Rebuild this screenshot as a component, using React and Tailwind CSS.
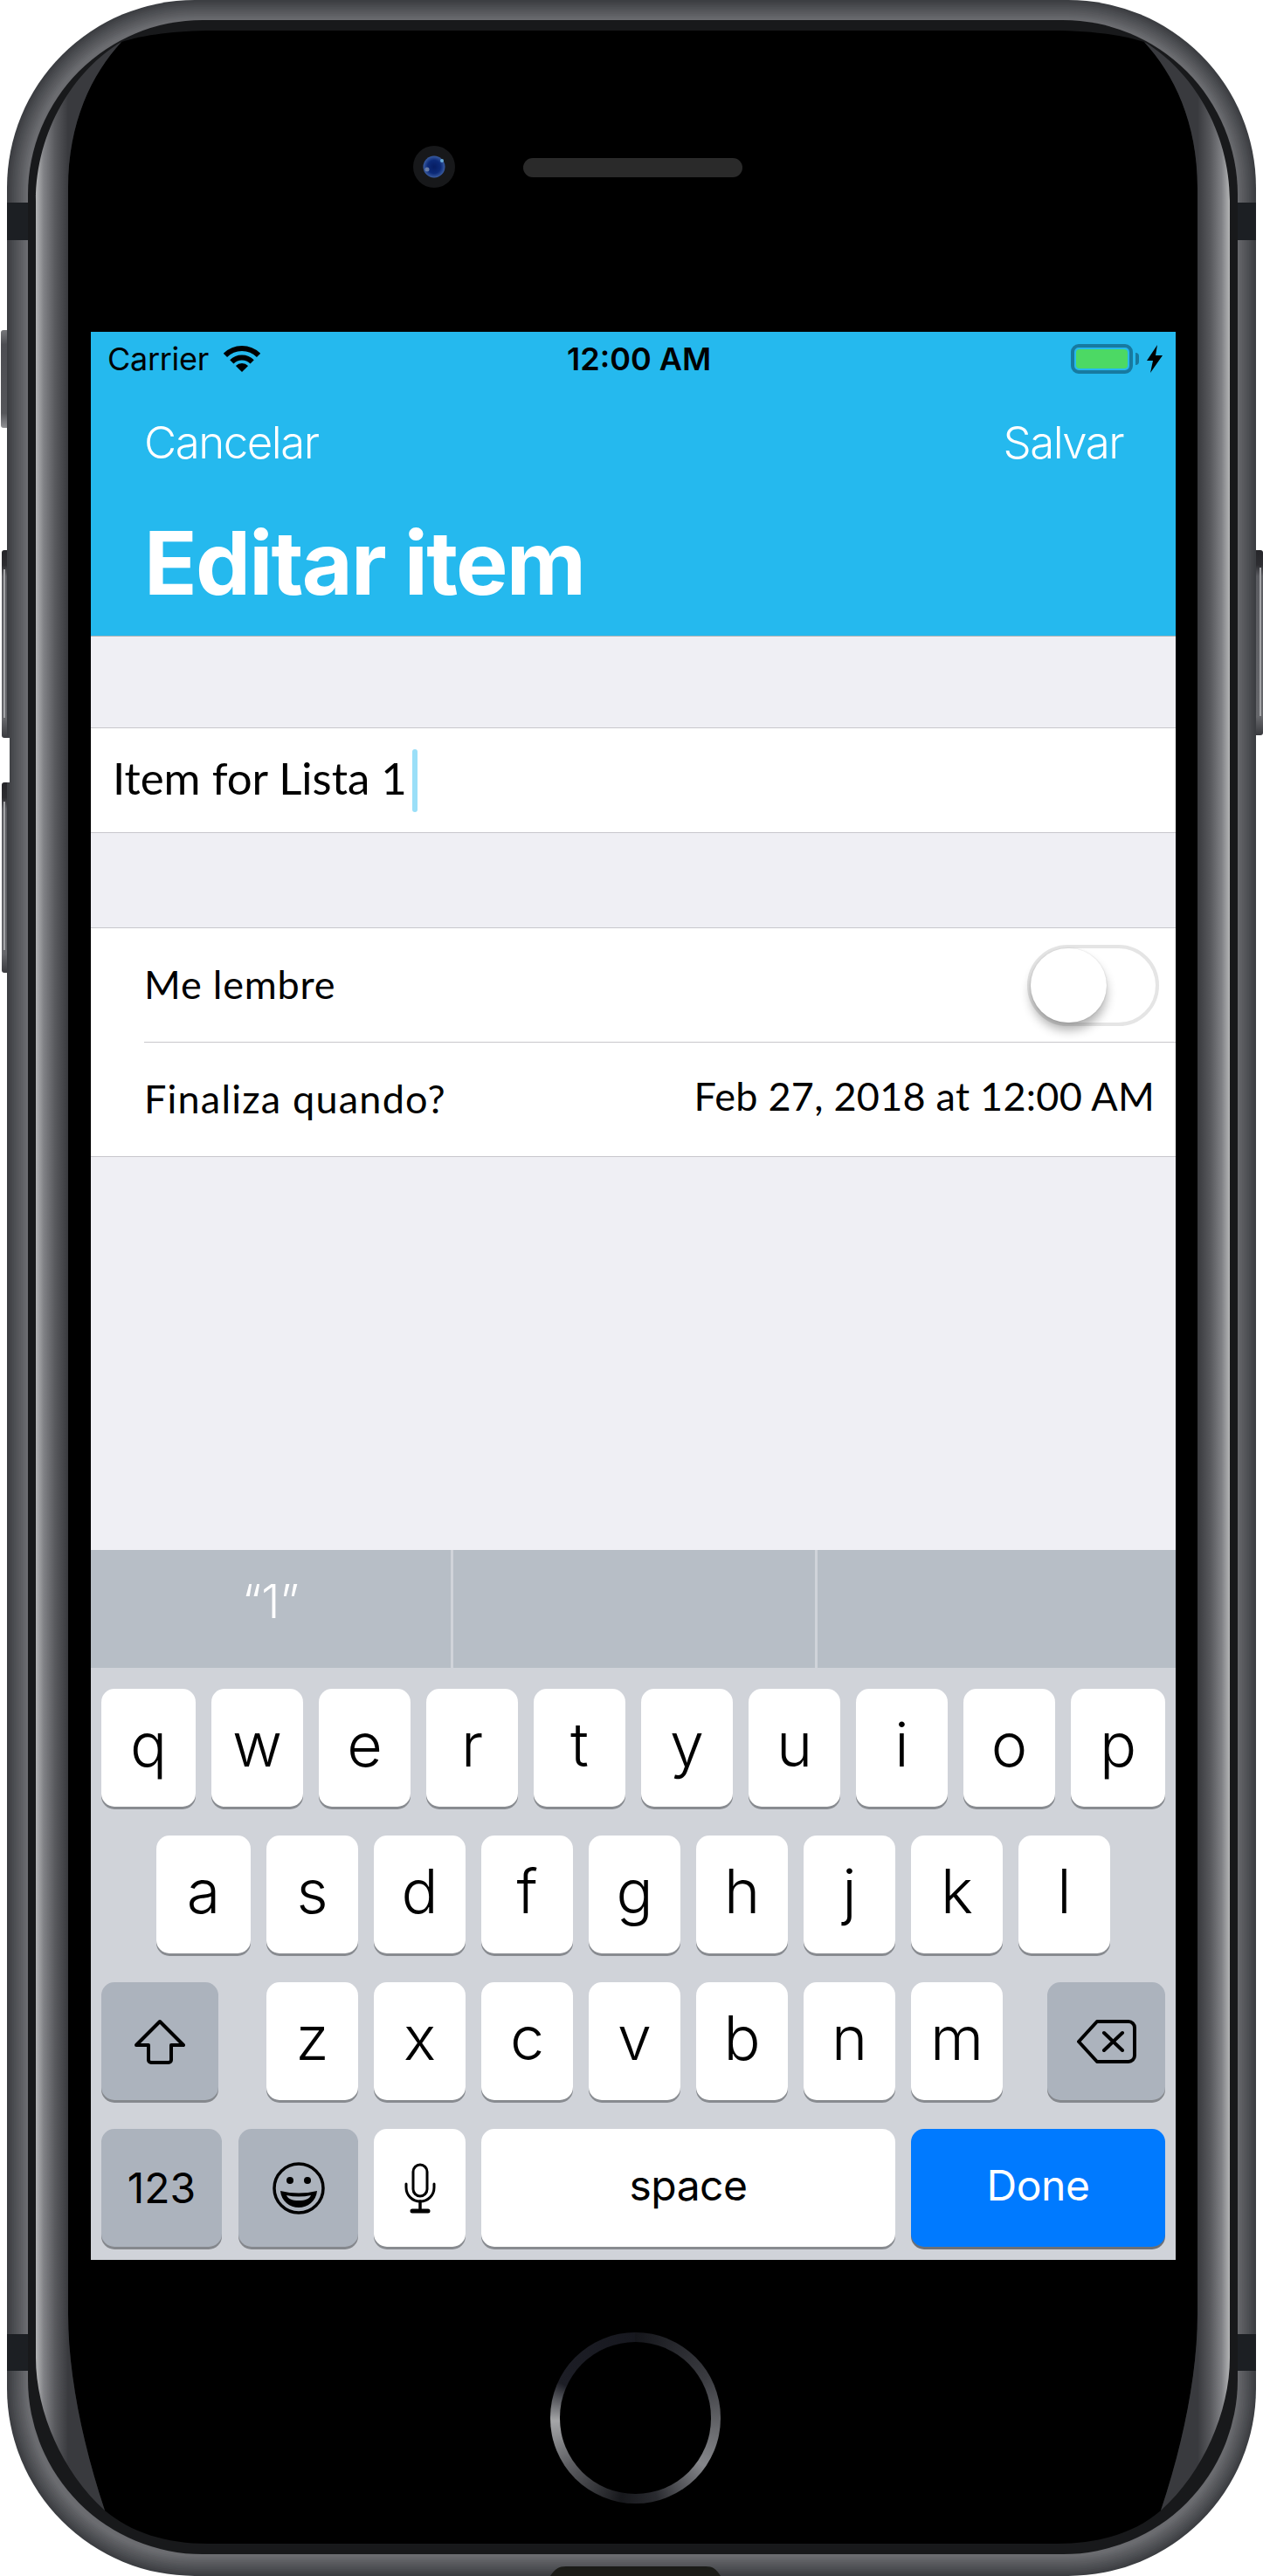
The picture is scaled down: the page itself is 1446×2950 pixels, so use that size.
import React from "react";

function lerp(a, b, t) {
  return Math.round(a + (b - a) * t);
}

function PhoneFrame() {
  const steps = [];
  for (let i = 0; i <= 11; i++) {
    const t = i / 11;
    const inset = i * 2;
    steps.push(
      <rect
        key={i}
        x={8 + inset}
        y={inset}
        width={1430 - inset * 2}
        height={2950 - inset * 2}
        rx={215 - inset}
        fill={`rgb(${lerp(60, 107, t)},${lerp(62, 108, t)},${lerp(66, 112, t)})`}
      />
    );
  }
  const left =
    "M139 48 C85 80 41 150 41 230 L41 2700 C41 2760 70 2830 120 2875 C95 2800 78 2720 78 2650 L78 215 C78 140 105 85 139 48Z";
  return (
    <svg className="absolute left-0 top-0" width="1446" height="2950" viewBox="0 0 1446 2950">
      <defs>
        <linearGradient id="hl" gradientUnits="userSpaceOnUse" x1="41" y1="0" x2="78" y2="0">
          <stop offset="0" stopColor="#b4b5b6" />
          <stop offset="0.25" stopColor="#808185" />
          <stop offset="0.6" stopColor="#58595d" />
          <stop offset="1" stopColor="#393a3e" />
        </linearGradient>
        <linearGradient id="hr" gradientUnits="userSpaceOnUse" x1="1408" y1="0" x2="1371" y2="0">
          <stop offset="0" stopColor="#b4b5b6" />
          <stop offset="0.25" stopColor="#808185" />
          <stop offset="0.6" stopColor="#58595d" />
          <stop offset="1" stopColor="#393a3e" />
        </linearGradient>
        <linearGradient id="btn" x1="0" y1="0" x2="0" y2="1">
          <stop offset="0" stopColor="#26262a" />
          <stop offset="0.08" stopColor="#2d2d31" />
          <stop offset="0.14" stopColor="#5c5d62" />
          <stop offset="0.9" stopColor="#66676b" />
          <stop offset="1" stopColor="#3a3b3f" />
        </linearGradient>
        <linearGradient id="mute" x1="0" y1="0" x2="0" y2="1">
          <stop offset="0" stopColor="#77787b" />
          <stop offset="0.15" stopColor="#4c4d52" />
          <stop offset="0.85" stopColor="#55565a" />
          <stop offset="1" stopColor="#909194" />
        </linearGradient>
        <radialGradient id="lens" cx="0.5" cy="0.5" r="0.5">
          <stop offset="0" stopColor="#061d63" />
          <stop offset="0.6" stopColor="#0c2a78" />
          <stop offset="1" stopColor="#3a5ca0" />
        </radialGradient>
      </defs>

      {/* side buttons */}
      <rect x="1" y="378" width="12" height="112" rx="3" fill="url(#mute)" />
      <rect x="2" y="630" width="14" height="215" rx="3" fill="url(#btn)" />
      <rect x="2" y="896" width="14" height="218" rx="3" fill="url(#btn)" />
      <rect x="4" y="652" width="2" height="170" fill="#a3a4a7" />
      <rect x="4" y="918" width="2" height="170" fill="#a3a4a7" />
      <rect x="1432" y="630" width="14" height="212" rx="3" fill="url(#btn)" />
      <rect x="1442" y="650" width="2" height="170" fill="#a3a4a7" />

      {/* body */}
      {steps}
      <rect x="8" y="232" width="24" height="43" fill="#1c1f23" />
      <rect x="1417" y="232" width="21" height="43" fill="#1c1f23" />
      <rect x="8" y="2673" width="24" height="42" fill="#1c1f23" />
      <rect x="1417" y="2673" width="21" height="42" fill="#1c1f23" />
      <rect x="8" y="845" width="3" height="51" fill="#fff" />
      <path d="M630 2950 C635 2942 640 2939 648 2939 L808 2939 C816 2939 820 2942 825 2950Z" fill="#1b1c18" />

      {/* bezel */}
      <rect x="32" y="23" width="1385" height="2902" rx="200" fill="#18191b" />
      <path
        d="M139 48 C165 40 200 35 245 35 L1204 35 C1249 35 1284 40 1310 48 C1344 85 1371 140 1371 215 L1371 2650 C1371 2720 1354 2800 1329 2875 C1300 2900 1260 2913 1210 2913 L239 2913 C189 2913 150 2900 120 2875 C95 2800 78 2720 78 2650 L78 215 C78 140 105 85 139 48Z"
        fill="#000"
      />
      <path d={left} fill="url(#hl)" />
      <path
        d="M1310 48 C1364 80 1408 150 1408 230 L1408 2700 C1408 2760 1379 2830 1329 2875 C1354 2800 1371 2720 1371 2650 L1371 215 C1371 140 1344 85 1310 48Z"
        fill="url(#hr)"
      />

      {/* camera and speaker */}
      <circle cx="497" cy="191" r="24" fill="#17181a" />
      <circle cx="497" cy="191" r="12.5" fill="url(#lens)" />
      <circle cx="489" cy="194" r="2.5" fill="#7d8fb0" opacity="0.8" />
      <circle cx="506" cy="184" r="2" fill="#6fb4e0" opacity="0.9" />
      <rect x="599" y="181" width="251" height="22" rx="11" fill="#2a2a2a" />
    </svg>
  );
}

function Wifi() {
  return (
    <svg width="42" height="30" viewBox="0 0 42 30" fill="none">
      <path d="M1.91 10.91 A27 27 0 0 1 40.09 10.91" stroke="#000" strokeWidth="6" />
      <path d="M9.33 18.33 A16.5 16.5 0 0 1 32.67 18.33" stroke="#000" strokeWidth="6" />
      <path d="M21 30 L13.9 22.9 A10 10 0 0 1 28.1 22.9Z" fill="#000" />
    </svg>
  );
}

function Battery() {
  return (
    <div className="flex items-center">
      <div className="w-[71px] h-[34px] rounded-[9px] border-[4px] border-[#177aa0] p-[2px]">
        <div className="w-full h-full rounded-[4px] bg-[#4cd964]" />
      </div>
      <div className="w-[4px] h-[14px] ml-[3px] rounded-r-[4px] bg-[#177aa0]" />
      <svg className="ml-[9px]" width="18" height="32" viewBox="0 0 18 32">
        <path d="M12 0 L0 18 L7 18 L4 32 L18 12 L10 12 Z" fill="#000" />
      </svg>
    </div>
  );
}

function Key({ children, w = "w-[105px]", kind = "white", text = "text-[70px] font-light pb-[8px]" }) {
  const colour =
    kind === "white"
      ? "bg-white text-black shadow-[0_3px_0_#888b90]"
      : kind === "dark"
      ? "bg-[#acb3bd] text-black shadow-[0_3px_0_#85888d]"
      : "bg-[#007aff] text-white shadow-[0_3px_0_#6c7076]";
  return (
    <div className={`${w} ${colour} ${text} h-[135px] shrink-0 rounded-[15px] flex items-center justify-center leading-none`}>
      {children}
    </div>
  );
}

function Letters({ letters }) {
  return letters.map((l) => <Key key={l}>{l}</Key>);
}

function ShiftIcon() {
  return (
    <svg width="58" height="52" viewBox="0 0 58 52" fill="none" stroke="#000" strokeWidth="4" strokeLinejoin="round">
      <path d="M29 3 L56 30 H42 V47 a3 3 0 0 1 -3 3 H19 a3 3 0 0 1 -3 -3 V30 H2 Z" />
    </svg>
  );
}

function DeleteIcon() {
  return (
    <svg width="68" height="50" viewBox="0 0 68 50" fill="none" stroke="#000" strokeWidth="4" strokeLinejoin="round" strokeLinecap="round">
      <path d="M23 2 H59 a7 7 0 0 1 7 7 V41 a7 7 0 0 1 -7 7 H23 L2 25 Z" />
      <path d="M31 15 L52 35 M52 15 L31 35" />
    </svg>
  );
}

function EmojiIcon() {
  return (
    <svg width="60" height="60" viewBox="0 0 60 60">
      <circle cx="30" cy="30" r="28" fill="none" stroke="#000" strokeWidth="3.5" />
      <circle cx="20" cy="21" r="4" fill="#000" />
      <circle cx="40" cy="21" r="4" fill="#000" />
      <path d="M9 33 Q30 38 51 33 C50 45 40 52 30 52 C20 52 10 45 9 33Z" fill="#000" />
      <path d="M16 38 Q30 41 44 38 C42 42 38 44 30 44 C22 44 18 42 16 38Z" fill="#acb3bd" />
    </svg>
  );
}

function MicIcon() {
  return (
    <svg width="36" height="58" viewBox="0 0 36 58" fill="none" stroke="#000" strokeLinecap="round">
      <rect x="10" y="2" width="16" height="36" rx="8" strokeWidth="3" />
      <path d="M2 24 V28 C2 37 9 44 18 44 C27 44 34 37 34 28 V24" strokeWidth="3" />
      <path d="M18 44 V54" strokeWidth="3.5" />
      <path d="M9 55 H27" strokeWidth="5" />
    </svg>
  );
}

function Toggle() {
  return (
    <div className="w-[151px] h-[93px] rounded-full border-[4px] border-[#e5e5e5] bg-white">
      <div className="w-[87px] h-[85px] rounded-full bg-white shadow-[0_9px_12px_rgba(0,0,0,0.3),0_0_2px_rgba(0,0,0,0.15)]" />
    </div>
  );
}

export default function App() {
  return (
    <div className="relative w-[1446px] h-[2950px] bg-white overflow-hidden pt-[380px] pl-[104px] [font-family:Inter,sans-serif]">
      <PhoneFrame />

      <div className="absolute left-[630px] top-[2671px] w-[195px] h-[196px] rounded-full p-[11px] bg-[conic-gradient(from_0deg,#15161b_0deg,#3a3b40_60deg,#6b6c70_100deg,#85868a_125deg,#2a2b30_165deg,#17181c_190deg,#5e5f63_235deg,#a5a6a8_268deg,#1d1e26_295deg,#17181f_360deg)]">
        <div className="w-full h-full rounded-full bg-black" />
      </div>

      <div className="relative w-[1242px] h-[2208px] bg-[#efeff4] flex flex-col overflow-hidden">
        {/* nav */}
        <div className="h-[349px] shrink-0 bg-[#25b9ee] border-b border-[#b0b4b8] flex flex-col">
          <div className="h-[60px] relative flex items-center justify-between pt-[2px] pl-[19px] pr-[15px] text-[36px] leading-none text-black">
            <div className="flex items-center gap-[17px]">
              <span className="tracking-[-0.3px]">Carrier</span>
              <Wifi />
            </div>
            <span className="absolute left-[545px] font-semibold">12:00 AM</span>
            <Battery />
          </div>
          <div className="flex justify-between pl-[61px] pr-[60px] pt-[37px] text-[51px] leading-[60px] tracking-[-1.5px] text-white font-light">
            <span>Cancelar</span>
            <span>Salvar</span>
          </div>
          <div className="pl-[61px] pt-[48px] text-[100px] leading-[120px] tracking-[-1.8px] font-bold text-white">Editar item</div>
        </div>

        {/* form */}
        <div className="mt-[104px] h-[121px] shrink-0 bg-white border-y border-[#c8c7cc] flex items-center pl-[25px] [font-family:Lato,sans-serif] text-[51px] text-black">
          <span className="pb-[4px]">Item for Lista 1</span>
          <span className="ml-[6px] w-[6px] h-[72px] rounded-full bg-[#9adff8]" />
        </div>

        <div className="mt-[108px] h-[263px] shrink-0 bg-white border-y border-[#c8c7cc] flex flex-col [font-family:Lato,sans-serif] text-[45px] text-black">
          <div className="ml-[61px] h-[131px] border-b border-[#c8c7cc] flex items-center justify-between pr-[19px]">
            <span className="tracking-[0.8px]">Me lembre</span>
            <Toggle />
          </div>
          <div className="ml-[61px] flex-1 flex items-center justify-between pr-[24px]">
            <span className="tracking-[1.2px]">Finaliza quando?</span>
            <span className="tracking-[0.25px] pb-[6px]">Feb 27, 2018 at 12:00 AM</span>
          </div>
        </div>

        <div className="flex-1" />

        {/* suggestions */}
        <div className="h-[135px] shrink-0 bg-[#b7bec6] flex">
          <div className="w-[412px] flex items-center justify-center text-[54px] font-light text-white pb-[18px]">“1”</div>
          <div className="w-[3px] bg-[#d0d4da]" />
          <div className="w-[414px]" />
          <div className="w-[3px] bg-[#d0d4da]" />
          <div className="flex-1" />
        </div>

        {/* keyboard */}
        <div className="h-[678px] shrink-0 bg-[#d0d3d9] flex flex-col gap-[33px] pt-[24px]">
          <div className="flex gap-[18px] px-[12px]">
            <Key w="w-[108px]">q</Key>
            <Letters letters={["w", "e", "r", "t", "y", "u", "i", "o"]} />
            <Key w="w-[108px]">p</Key>
          </div>
          <div className="flex gap-[18px] px-[75px]">
            <Key w="w-[108px]">a</Key>
            <Letters letters={["s", "d", "f", "g", "h", "j", "k"]} />
            <Key w="w-[105px]">l</Key>
          </div>
          <div className="flex gap-[18px] pl-[12px] pr-[12px]">
            <Key w="w-[134px] mr-[37px]" kind="dark" text="">
              <ShiftIcon />
            </Key>
            <Letters letters={["z", "x", "c", "v", "b", "n", "m"]} />
            <Key w="w-[135px] ml-[33px]" kind="dark" text="">
              <DeleteIcon />
            </Key>
          </div>
          <div className="flex gap-[18px] pl-[12px] pr-[12px]">
            <Key w="w-[138px] mr-[1px]" kind="dark" text="text-[48px]">123</Key>
            <Key w="w-[137px]" kind="dark" text="">
              <EmojiIcon />
            </Key>
            <Key text="">
              <MicIcon />
            </Key>
            <Key w="w-[474px]" text="text-[48px] tracking-[-0.5px] pb-[6px]">space</Key>
            <Key w="w-[291px]" kind="blue" text="text-[48px] tracking-[-0.5px] pb-[6px]">Done</Key>
          </div>
        </div>
      </div>
    </div>
  );
}
